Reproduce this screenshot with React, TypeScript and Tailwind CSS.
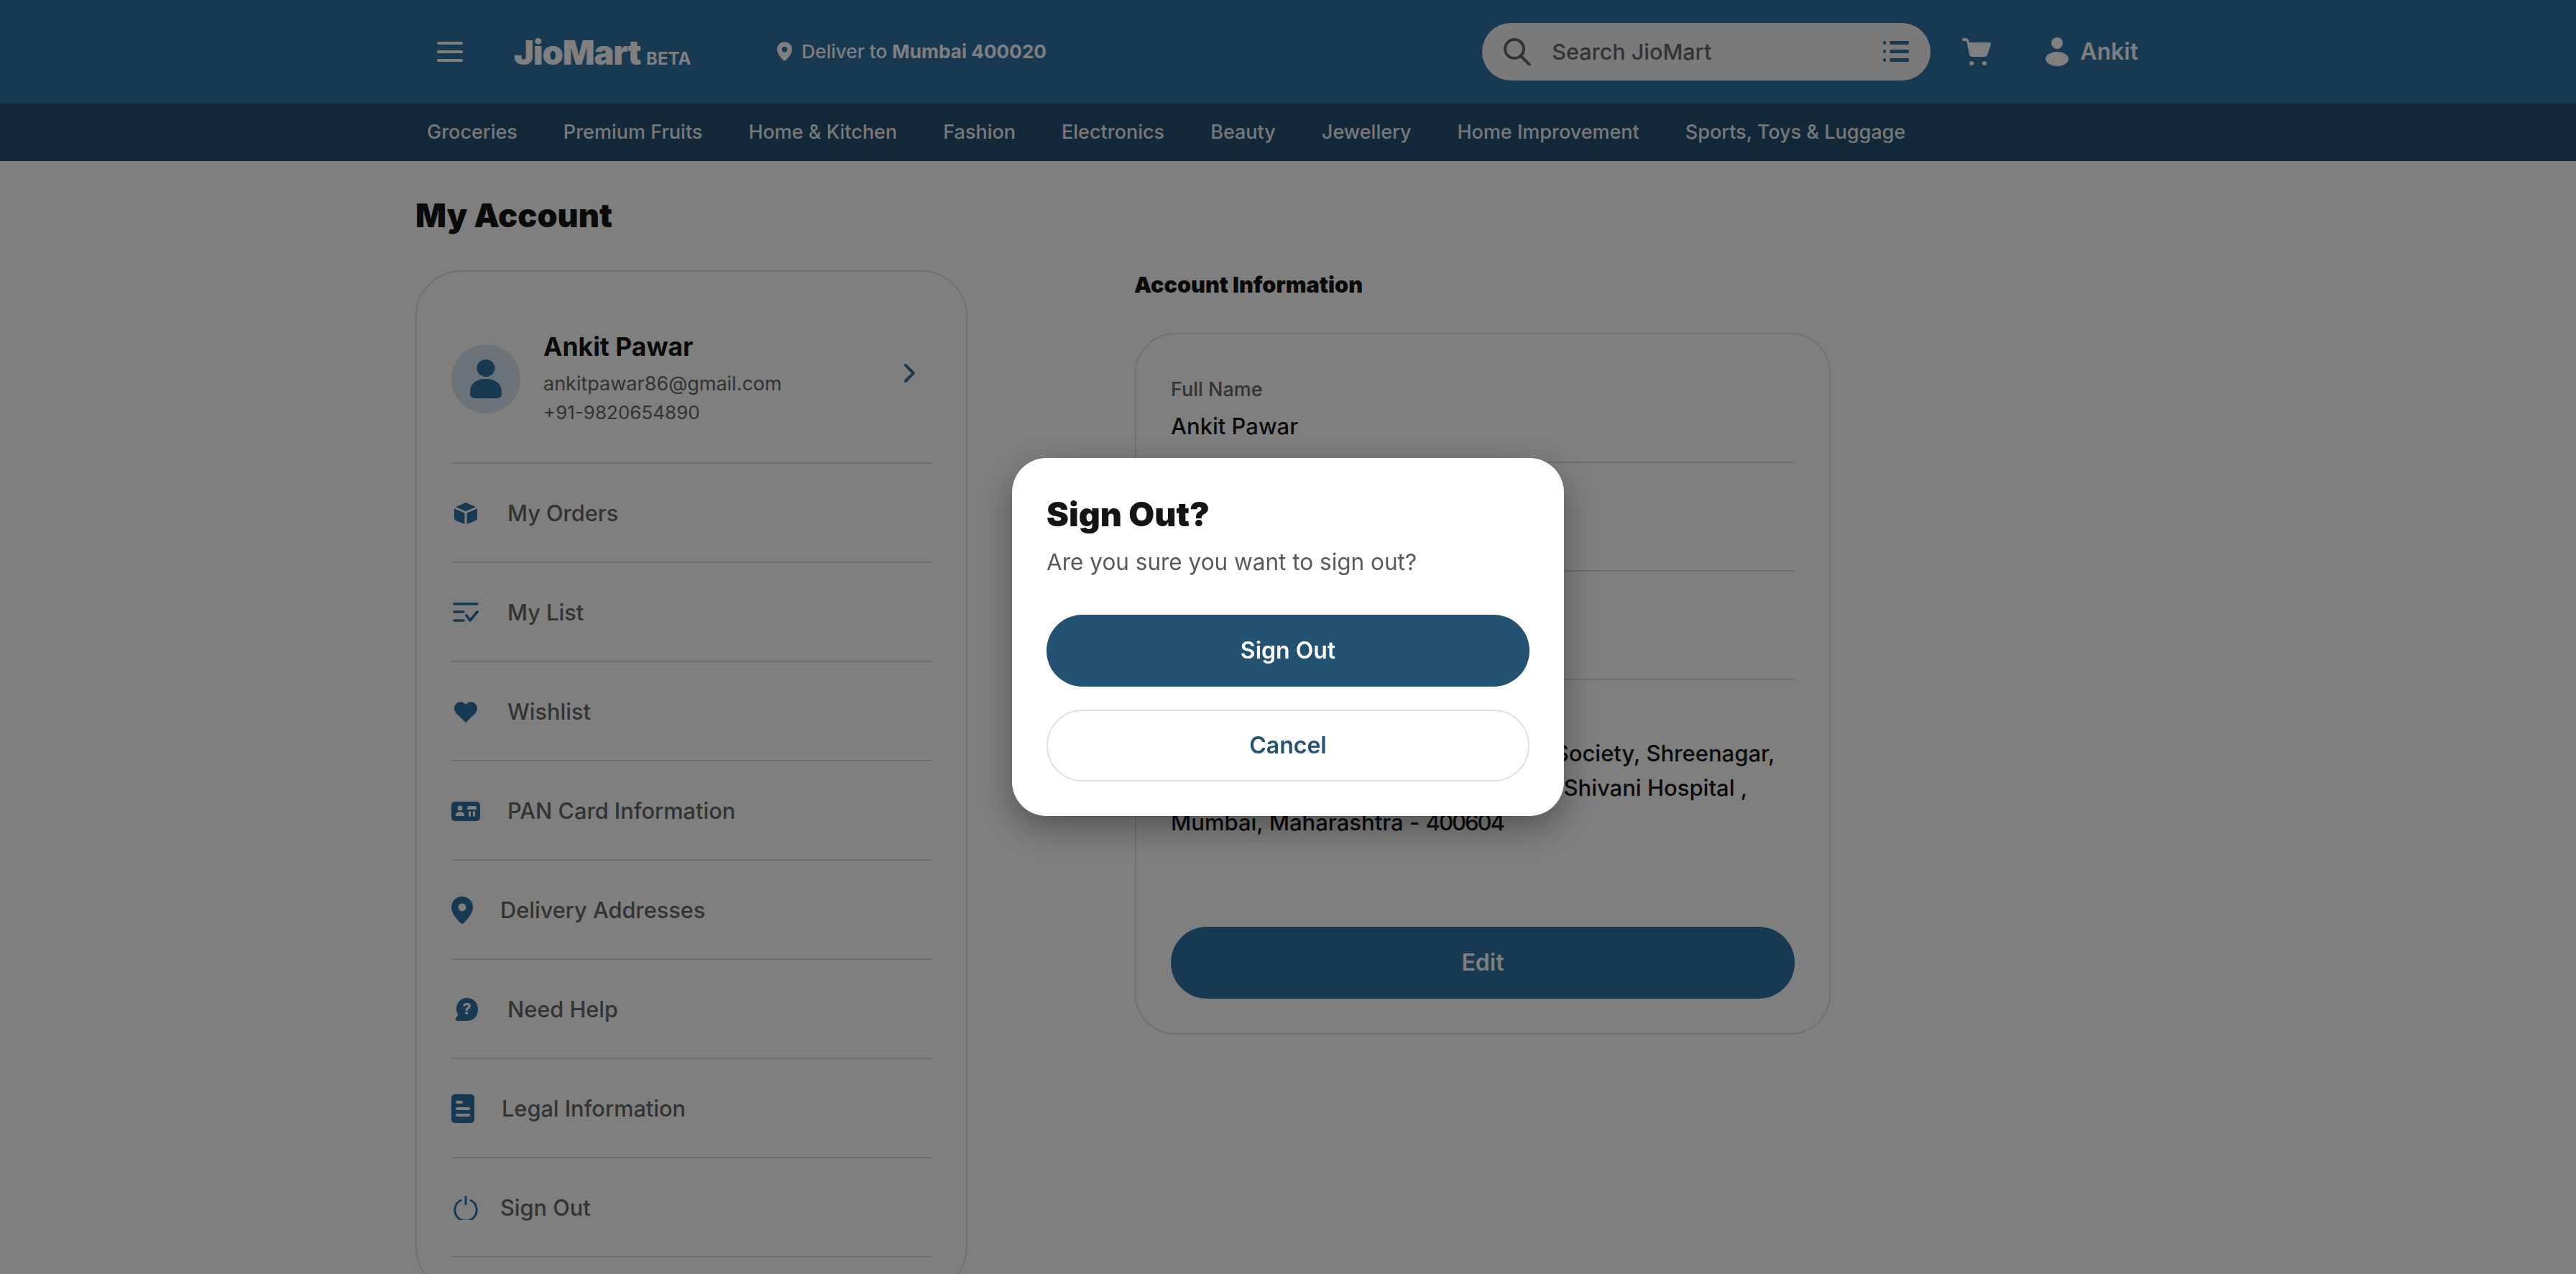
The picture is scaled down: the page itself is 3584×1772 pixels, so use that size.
import type { ReactNode } from "react"

const BoxIcon = () => (
    <svg width="32" height="30" viewBox="0 0 32 30" fill="currentColor">
        <path d="M16 0 L30 6.2 L16 12 L2 6.2 Z" />
        <path d="M0 8.6 L14.4 14.6 V30 L2 25 Q0 24.2 0 22 Z" />
        <path d="M32 8.6 L17.6 14.6 V30 L30 25 Q32 24.2 32 22 Z" />
    </svg>
)

const ListIcon = () => (
    <svg width="36" height="28" viewBox="0 0 36 28" fill="none" stroke="currentColor" strokeWidth="3.6" strokeLinecap="round" strokeLinejoin="round">
        <path d="M2 2 H34" />
        <path d="M2 13 H15" />
        <path d="M2 25 H15" />
        <path d="M19 18 L24 25 L34 13" />
    </svg>
)

const HeartIcon = () => (
    <svg width="32" height="29" viewBox="0 0 32 29" fill="currentColor">
        <path d="M16 29 L3 16.5 C-1 12.5 -1 6 3 2.5 C7 -1 12.5 -0.5 16 4 C19.5 -0.5 25 -1 29 2.5 C33 6 33 12.5 29 16.5 Z" />
    </svg>
)

const PanIcon = () => (
    <svg width="40" height="27" viewBox="0 0 40 27">
        <rect width="40" height="27" rx="5" fill="currentColor" />
        <circle cx="12" cy="9" r="3.4" fill="#fff" />
        <path d="M6 20 Q6 14 12 14 Q18 14 18 20 Z" fill="#fff" />
        <path d="M22 9 Q22 6 25 6 H32 Q35 6 35 9 V11 H22 Z" fill="#fff" />
        <rect x="24" y="13.5" width="3" height="7" fill="#fff" />
        <rect x="30" y="13.5" width="3" height="7" fill="#fff" />
    </svg>
)

const PinIcon = ({ w = 30, h = 38, hole = "#fff" }: { w?: number; h?: number; hole?: string }) => (
    <svg width={w} height={h} viewBox="0 0 30 38">
        <path d="M15 0 C6.7 0 0 6.6 0 15 C0 24 9 33 13 37 Q15 38.6 17 37 C21 33 30 24 30 15 C30 6.6 23.3 0 15 0 Z" fill="currentColor" />
        <circle cx="15" cy="15" r="5.4" fill={hole} />
    </svg>
)

const HelpIcon = () => (
    <svg width="32" height="32" viewBox="0 0 32 32">
        <path d="M17 0 C8 0 2 6.5 2 15 C2 18.5 3 21.5 4.5 23.5 L1 28 Q0 31.5 3 32 H17 C26 32 32 25 32 16 C32 7 26 0 17 0 Z" fill="currentColor" />
        <text x="16.5" y="23" textAnchor="middle" fontSize="21" fontWeight="800" fill="#fff" fontFamily="Inter, sans-serif">?</text>
    </svg>
)

const LegalIcon = () => (
    <svg width="32" height="40" viewBox="0 0 32 40">
        <rect width="32" height="40" rx="5" fill="currentColor" />
        <rect x="6" y="9" width="10" height="4" rx="2" fill="#fff" />
        <rect x="6" y="18" width="20" height="4" rx="2" fill="#fff" />
        <rect x="6" y="27" width="20" height="4" rx="2" fill="#fff" />
    </svg>
)

const PowerIcon = () => (
    <svg width="34" height="34" viewBox="0 0 34 34" fill="none" stroke="currentColor" strokeWidth="3" strokeLinecap="round">
        <path d="M10 6.5 A15.2 15.2 0 1 0 24 6.5" />
        <path d="M17 1.5 V12" />
    </svg>
)

const PersonIcon = () => (
    <svg width="44" height="76" viewBox="0 0 44 76" fill="currentColor" className="h-[54px] w-[44px]" preserveAspectRatio="none">
        <ellipse cx="22" cy="17" rx="12.5" ry="17" />
        <path d="M0 64 C0 46 10 38 22 38 C34 38 44 46 44 64 V68 Q44 76 37 76 H7 Q0 76 0 68 Z" />
    </svg>
)

const CartIcon = () => (
    <svg width="40" height="38" viewBox="0 0 40 38" fill="currentColor">
        <path d="M2 0 H5 Q8 0 9 3 L10 6 H37 Q40.5 6 39.5 10 L35.5 22 Q34.5 26 31 26 H14 Q10.5 26 9.8 22 L6 4 H2 Q0 4 0 2 Q0 0 2 0 Z" />
        <circle cx="13" cy="35" r="3" />
        <circle cx="31" cy="35" r="3" />
    </svg>
)

const menuItems: { label: string; slot: string; icon: ReactNode }[] = [
    { label: "My Orders", slot: "w-[78px] pl-[4px]", icon: <BoxIcon /> },
    { label: "My List", slot: "w-[78px] pl-[2px]", icon: <ListIcon /> },
    { label: "Wishlist", slot: "w-[78px] pl-[4px]", icon: <HeartIcon /> },
    { label: "PAN Card Information", slot: "w-[78px]", icon: <PanIcon /> },
    { label: "Delivery Addresses", slot: "w-[68px]", icon: <PinIcon /> },
    { label: "Need Help", slot: "w-[78px] pl-[5px]", icon: <HelpIcon /> },
    { label: "Legal Information", slot: "w-[70px]", icon: <LegalIcon /> },
    { label: "Sign Out", slot: "w-[68px] pl-[3px]", icon: <PowerIcon /> },
]

const navLinks = [
    "Groceries",
    "Premium Fruits",
    "Home & Kitchen",
    "Fashion",
    "Electronics",
    "Beauty",
    "Jewellery",
    "Home Improvement",
    "Sports, Toys & Luggage",
]

const Field = ({ label, value, first }: { label: string; value: string; first?: boolean }) => (
    <div className={`border-b-2 border-[#dddddd] pb-[25px] ${first ? "" : "pt-[31px]"}`}>
        <p className="text-[27px] leading-[36px] text-[#666666] font-medium">{label}</p>
        <p className="mt-[9px] text-[31px] leading-[48px] text-[#141414] font-medium">{value}</p>
    </div>
)

const App = () => {
    return (
        <div className="relative h-screen w-full overflow-hidden bg-white font-['Inter',sans-serif]">
            {/* Header */}
            <div className="h-[144px] bg-[#2e72a4]">
                <div className="mx-auto flex h-full w-[2428px] items-center pl-[30px] pr-[31px] text-white">
                    <div className="flex w-[36px] flex-col gap-[8px]">
                        <span className="h-[4px] rounded-full bg-white" />
                        <span className="h-[4px] rounded-full bg-white" />
                        <span className="h-[4px] rounded-full bg-white" />
                    </div>
                    <div className="ml-[71px] flex items-baseline">
                        <span className="text-[47px] leading-none font-black tracking-[-1.2px]">JioMart</span>
                        <span className="ml-[8px] text-[24px] leading-none font-bold">BETA</span>
                    </div>
                    <div className="ml-[120px] flex items-center">
                        <PinIcon w={21} h={27} hole="#2e72a4" />
                        <p className="ml-[13px] text-[26.2px] font-medium whitespace-nowrap">
                            Deliver to <span className="font-bold">Mumbai 400020</span>
                        </p>
                    </div>
                    <div className="ml-auto flex h-[80px] w-[624px] items-center rounded-full bg-[#f5f5f5] pl-[29px] pr-[30px]">
                        <svg width="40" height="38" viewBox="0 0 40 38" fill="none" stroke="#666666" strokeWidth="4" strokeLinecap="round">
                            <circle cx="16" cy="15" r="13" />
                            <path d="M25 25 L37 37" />
                        </svg>
                        <p className="ml-[28px] text-[30.5px] text-[#666666] font-medium">Search JioMart</p>
                        <svg className="ml-auto text-[#2e72a4]" width="36" height="30" viewBox="0 0 36 30" fill="currentColor">
                            <rect x="0" y="0" width="4" height="5" rx="2" />
                            <rect x="0" y="12" width="4" height="5" rx="2" />
                            <rect x="0" y="24" width="4" height="5" rx="2" />
                            <rect x="9" y="0" width="27" height="5" rx="2" />
                            <rect x="9" y="12" width="27" height="5" rx="2" />
                            <rect x="9" y="24" width="27" height="5" rx="2" />
                        </svg>
                    </div>
                    <div className="ml-[44px]">
                        <CartIcon />
                    </div>
                    <div className="ml-[76px] flex items-center">
                        <svg width="32" height="40" viewBox="0 0 32 40" fill="currentColor">
                            <circle cx="16" cy="8" r="8" />
                            <ellipse cx="16" cy="30" rx="16" ry="10" />
                        </svg>
                        <span className="ml-[16px] text-[32px] font-semibold">Ankit</span>
                    </div>
                </div>
            </div>

            {/* Category bar */}
            <div className="h-[80px] bg-[#265070]">
                <div className="mx-auto flex h-full w-[2428px] items-center gap-[64px] pl-[16px] text-[27px] font-medium text-[#f0f0f0]">
                    {navLinks.map((link) => (
                        <span key={link} className="whitespace-nowrap">{link}</span>
                    ))}
                </div>
            </div>

            {/* Page */}
            <div className="mx-auto w-[2428px]">
                <h1 className="mt-[48px] text-[45px] leading-[56px] font-black text-[#141414]">My Account</h1>
                <div className="mt-[48px] flex items-start">
                    <div className="w-[768px] rounded-[64px] border-2 border-[#e0e0e0] px-[48px] pb-[48px]">
                        <div className="flex h-[267px] items-center border-b-2 border-[#dddddd] pt-[33px]">
                            <div className="flex h-[96px] w-[96px] shrink-0 items-center justify-center rounded-full bg-[#d6e6f0] text-[#2e72a4]">
                                <PersonIcon />
                            </div>
                            <div className="ml-[32px]">
                                <p className="mt-[-2px] text-[35.5px] leading-[48px] font-bold text-[#141414]">Ankit Pawar</p>
                                <p className="mt-[7px] text-[27px] leading-[40px] text-[#666666]">ankitpawar86@gmail.com</p>
                                <p className="text-[26px] leading-[40px] text-[#666666]">+91-9820654890</p>
                            </div>
                            <svg className="ml-auto mr-[22px] mb-[16px] text-[#2e72a4]" width="17" height="28" viewBox="0 0 17 28" fill="none" stroke="currentColor" strokeWidth="4" strokeLinecap="round" strokeLinejoin="round">
                                <path d="M3 3 L14 14 L3 25" />
                            </svg>
                        </div>
                        {menuItems.map((item) => (
                            <div key={item.label} className="flex h-[138px] items-center border-b-2 border-[#dddddd] pt-[2px]">
                                <div className={`flex shrink-0 items-center text-[#2e72a4] ${item.slot}`}>{item.icon}</div>
                                <span className="text-[30.7px] font-medium text-[#666666]">{item.label}</span>
                            </div>
                        ))}
                    </div>

                    {/* Account details */}
                    <div className="ml-[233px] w-[968px]">
                        <h2 className="ml-[-1px] text-[30.6px] leading-[40px] font-black text-[#141414]">Account Information</h2>
                        <div className="mt-[47px] rounded-[56px] border-2 border-[#e0e0e0] px-[48px] pt-[59px] pb-[48px]">
                            <Field first label="Full Name" value="Ankit Pawar" />
                            <Field label="Email" value="ankitpawar86@gmail.com" />
                            <Field label="Mobile Number" value="+91-9820654890" />
                            <div className="pt-[31px]">
                                <p className="text-[27px] leading-[36px] text-[#666666] font-medium">Address</p>
                                <p className="mt-[11px] text-[31px] leading-[48px] text-[#141414] font-medium">
                                    Flat. 402, Building 7, Sai Krupa Park Society, Shreenagar,
                                    <br />
                                    Wagle Estate Road, Thane (W), Near Shivani Hospital ,
                                    <br />
                                    Mumbai, Maharashtra - <span className="tracking-[-2px]">400604</span>
                                </p>
                            </div>
                            <button className="mt-[121px] h-[100px] w-full rounded-full bg-[#2e72a4] text-[32px] font-semibold text-white">Edit</button>
                        </div>
                    </div>
                </div>
            </div>

            {/* Sign out dialog */}
            <div className="fixed inset-0 flex items-center justify-center bg-black/50">
                <div className="w-[768px] rounded-[48px] bg-white p-[48px] shadow-[0_16px_48px_rgba(0,0,0,0.35)]">
                    <h3 className="text-[46.5px] leading-[60px] font-black text-[#141414]">Sign Out?</h3>
                    <p className="mt-[15px] text-[31.5px] leading-[44px] text-[#595959]">Are you sure you want to sign out?</p>
                    <button className="mt-[51px] block h-[100px] w-full rounded-full bg-[#245371] text-[32px] font-semibold text-white">Sign Out</button>
                    <button className="mt-[32px] block h-[100px] w-full rounded-full border-2 border-[#e0e0e0] bg-white text-[32px] font-semibold text-[#245371]">Cancel</button>
                </div>
            </div>
        </div>
    )
}

export default App
